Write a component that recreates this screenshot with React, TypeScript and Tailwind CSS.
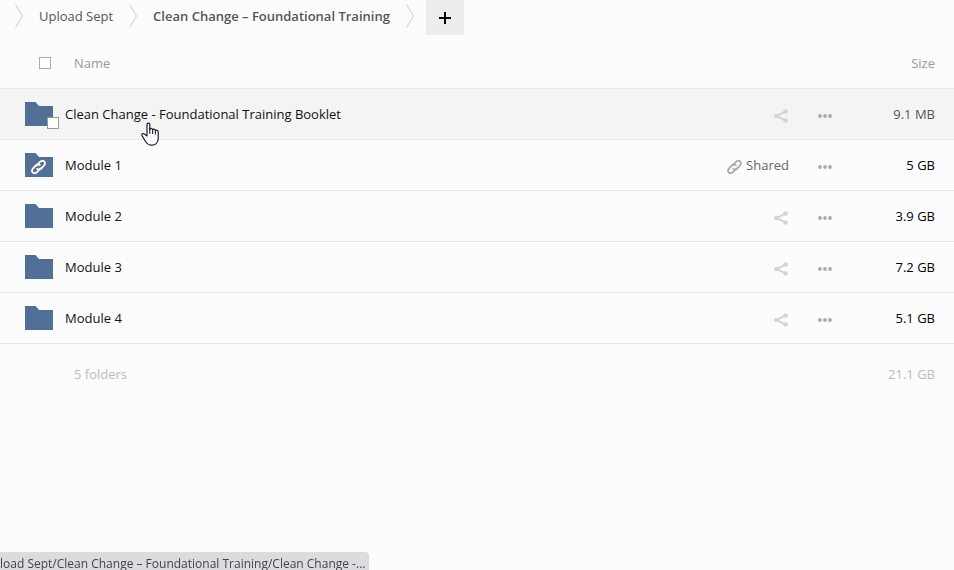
interface Folder {
  name: string;
  size: string;
  shared?: boolean;
  hovered?: boolean;
}

const folders: Folder[] = [
  {
    name: "Clean Change - Foundational Training Booklet",
    size: "9.1 MB",
    hovered: true,
  },
  { name: "Module 1", size: "5 GB", shared: true },
  { name: "Module 2", size: "3.9 GB" },
  { name: "Module 3", size: "7.2 GB" },
  { name: "Module 4", size: "5.1 GB" },
];

const Chevron = () => (
  <svg width="8" height="26" viewBox="0 0 8 26" fill="none" aria-hidden="true">
    <path d="M0.5 1.5L7.5 13L0.5 24.5" stroke="#d6d6d6" strokeWidth="1.1" />
  </svg>
);

const LinkIcon = ({ className }: { className: string }) => (
  <svg
    width="15"
    height="16"
    viewBox="0.5 0 15 16"
    fill="none"
    stroke="currentColor"
    strokeWidth="1.8"
    strokeLinecap="round"
    className={className}
    aria-hidden="true"
  >
    <path d="M6.2 6.6L9.3 3.1C10.5 1.7 12.4 1.3 13.6 2.4C14.8 3.5 14.6 5.2 13.4 6.6L10.7 9.6C9.5 10.9 7.8 11 6.7 9.8" />
    <path d="M9.8 9.4L6.7 12.9C5.5 14.3 3.6 14.7 2.4 13.6C1.2 12.5 1.4 10.8 2.6 9.4L5.3 6.4C6.5 5.1 8.2 5 9.3 6.2" />
  </svg>
);

const FolderIcon = () => (
  <svg width="28" height="24" viewBox="0 0 28 24" aria-hidden="true">
    <path d="M0 0H10.5L14 4H28V24H0Z" fill="#527097" />
  </svg>
);

const ShareIcon = () => (
  <svg
    width="15"
    height="14"
    viewBox="0 0 15 14"
    fill="currentColor"
    aria-hidden="true"
  >
    <path
      d="M11.5 2.6L2.5 7L11.5 11.4"
      stroke="currentColor"
      strokeWidth="2"
      fill="none"
    />
    <circle cx="2.4" cy="7" r="2.3" />
    <circle cx="11.6" cy="2.5" r="2.3" />
    <circle cx="11.6" cy="11.5" r="2.3" />
  </svg>
);

const DotsIcon = () => (
  <svg
    width="14"
    height="4"
    viewBox="0 0 14 4"
    fill="currentColor"
    aria-hidden="true"
  >
    <circle cx="2" cy="2" r="1.9" />
    <circle cx="7" cy="2" r="1.9" />
    <circle cx="12" cy="2" r="1.9" />
  </svg>
);

const HandPointer = () => (
  <svg
    width="18"
    height="24"
    viewBox="0 0 18 24"
    className="absolute left-[141px] top-[33px] pointer-events-none"
    aria-hidden="true"
  >
    <path
      d="M6 14V2.6C6 0.5 8.8 0.5 8.8 2.6V7.5C9.2 6 11.4 6.2 11.6 7.8C12 6.7 14.2 6.9 14.4 8.6C14.9 7.8 17.2 8 17.2 10V16.5C17.2 20.5 14.5 23.2 10.8 23.2C7.2 23.2 5.6 21.4 4.2 19L1 13.6C0.2 12 2 10.9 3.3 12Z"
      fill="white"
      stroke="#1c1c28"
      strokeWidth="1.2"
      strokeLinejoin="round"
    />
    <path
      d="M8.8 7V11.5M11.6 7.8V11.5M14.4 8.6V12"
      stroke="#1c1c28"
      strokeWidth="1.1"
      strokeLinecap="round"
    />
  </svg>
);

const checkbox = "block appearance-none w-3 h-3 border bg-white";

const FolderRow = ({ name, size, shared, hovered }: Folder) => (
  <tr
    className={
      hovered
        ? "h-[51px] border-y border-[#e8e8e8] bg-[#f4f4f4]"
        : "h-[51px] border-b border-[#e8e8e8]"
    }
  >
    <td className="relative pl-[25px]">
      <div className="flex items-center gap-3">
        <div className="relative h-6 shrink-0">
          <FolderIcon />
          {shared && (
            <LinkIcon className="absolute left-[6px] top-[6px] text-white" />
          )}
          {hovered && (
            <input
              type="checkbox"
              aria-label={`Select ${name}`}
              className={`${checkbox} absolute left-[22px] top-[15px] border-[#999]`}
            />
          )}
        </div>
        <a href="#" className="text-[#111]">
          {name}
        </a>
      </div>
      {hovered && <HandPointer />}
    </td>
    <td>
      <button
        aria-label={shared ? undefined : `Share ${name}`}
        className="ml-auto flex items-center gap-1 text-[#d4d4d4]"
      >
        {shared ? (
          <>
            <LinkIcon className="mt-1 text-[#aaa]" />
            <span className="text-[#666]">Shared</span>
          </>
        ) : (
          <span className="mt-1">
            <ShareIcon />
          </span>
        )}
      </button>
    </td>
    <td>
      <button
        aria-label={`Actions for ${name}`}
        className="mx-auto mt-1 block text-[#aaa]"
      >
        <DotsIcon />
      </button>
    </td>
    <td
      className={
        hovered
          ? "pr-[19px] text-right text-[#555]"
          : "pr-[19px] text-right text-black"
      }
    >
      {size}
    </td>
  </tr>
);

const App = () => {
  return (
    <div className="min-h-screen bg-[#fcfcfc] font-['Open_Sans',sans-serif] text-[13px] leading-5">
      {/* Breadcrumbs */}
      <header className="flex h-[35px] items-start pl-[15px]">
        <nav
          aria-label="Breadcrumb"
          className="flex h-8 items-center gap-4"
        >
          <Chevron />
          <a href="#" className="text-[#555]">
            Upload Sept
          </a>
          <Chevron />
          <a href="#" className="font-semibold text-[#555]">
            Clean Change – Foundational Training
          </a>
          <Chevron />
        </nav>
        <button
          aria-label="New"
          className="ml-3 flex h-full w-[38px] items-center justify-center rounded-b-xs bg-[#ededed]"
        >
          <svg width="12" height="12" viewBox="0 0 12 12" aria-hidden="true">
            <path d="M0 6H12M6 0V12" stroke="black" strokeWidth="2" />
          </svg>
        </button>
      </header>

      {/* Files */}
      <table className="w-full table-fixed border-collapse">
        <colgroup>
          <col />
          <col className="w-[120px]" />
          <col className="w-[72px]" />
          <col className="w-[93px]" />
        </colgroup>
        <thead>
          <tr className="h-[53px] text-[#999]">
            <th className="pb-1 pl-[39px] text-left font-normal" colSpan={3}>
              <div className="flex items-center gap-[23px] pt-2">
                <input
                  type="checkbox"
                  aria-label="Select all"
                  className={`${checkbox} border-[#aaa]`}
                />
                <span>Name</span>
              </div>
            </th>
            <th className="pb-1 pr-[19px] pt-2 text-right font-normal">Size</th>
          </tr>
        </thead>
        <tbody>
          {folders.map((folder) => (
            <FolderRow key={folder.name} {...folder} />
          ))}
        </tbody>
        <tfoot>
          <tr className="h-[62px] text-[#bbb]">
            <td className="pl-[74px]" colSpan={3}>
              5 folders
            </td>
            <td className="pr-[19px] text-right">21.1 GB</td>
          </tr>
        </tfoot>
      </table>

      {/* Link preview */}
      <div className="fixed bottom-0 left-0 h-[18px] whitespace-nowrap rounded-tr-sm bg-[#dcdce0] pr-1 pt-0.5 text-xs leading-5 text-[#444]">
        load Sept/Clean Change – Foundational Training/Clean Change -...
      </div>
    </div>
  );
};

export default App;
